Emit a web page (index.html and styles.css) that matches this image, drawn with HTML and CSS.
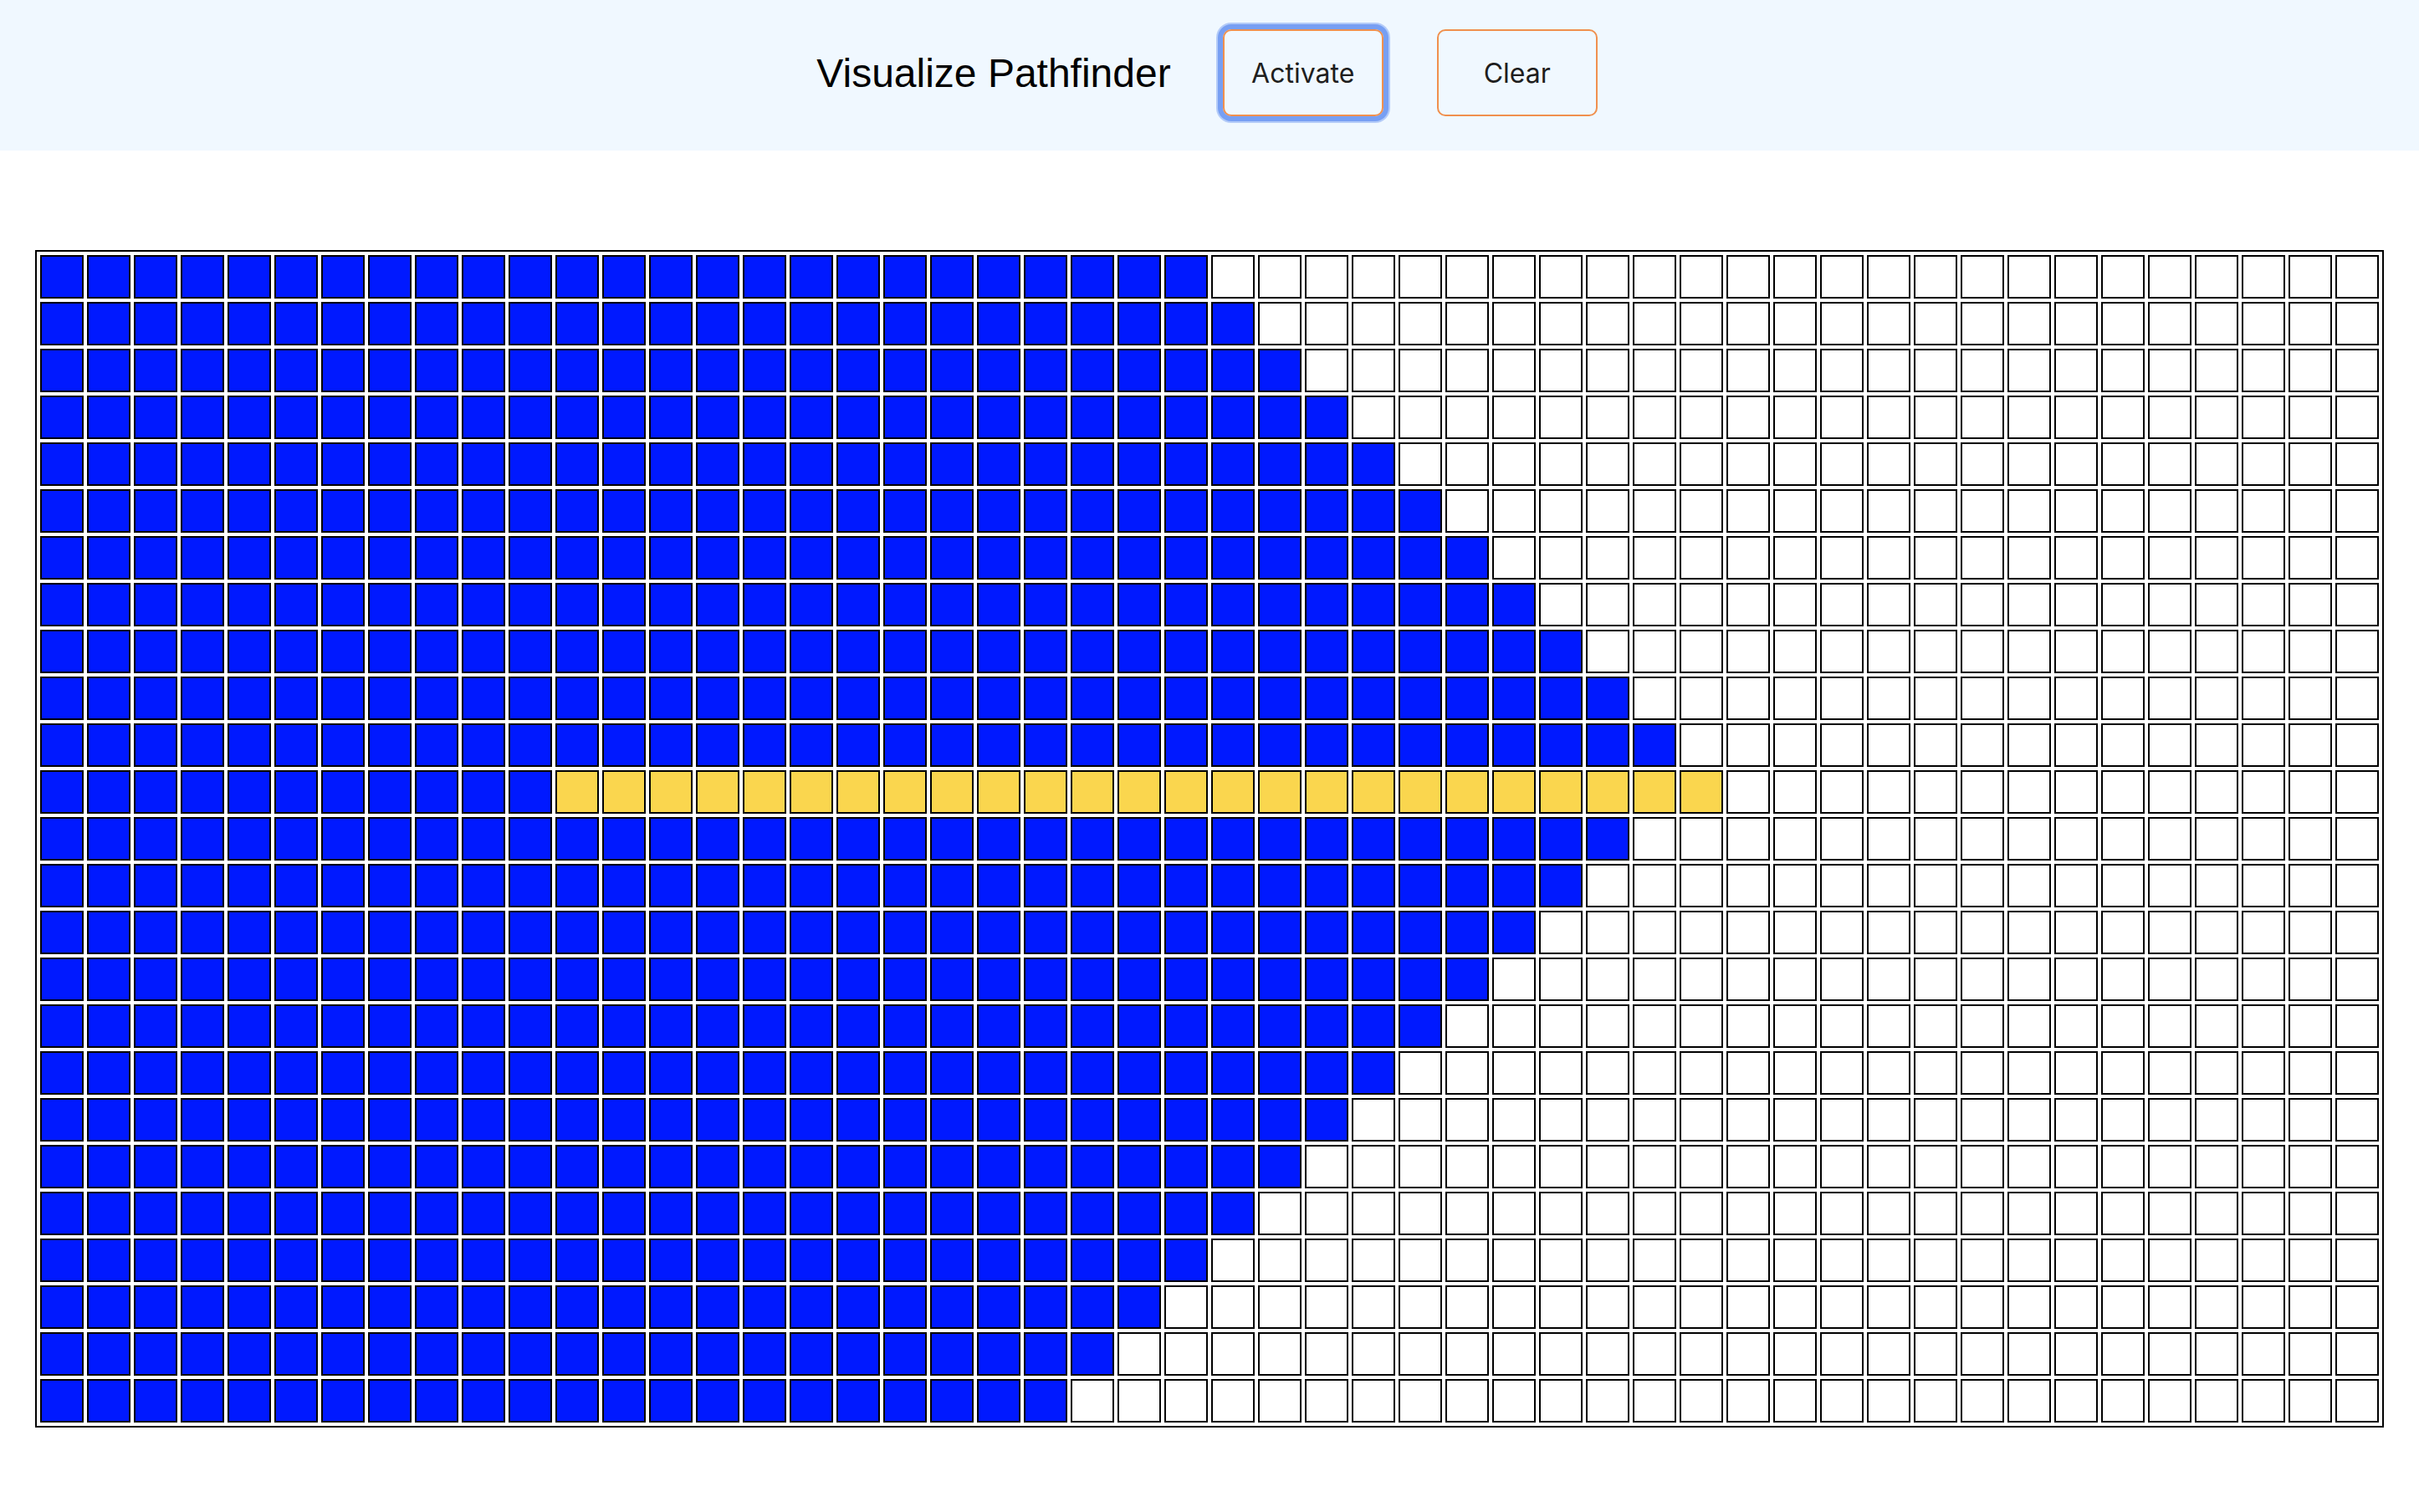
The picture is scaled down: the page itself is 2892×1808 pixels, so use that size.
FILE: index.html
```html
<!DOCTYPE html>
<html lang="en">
<head>
    <meta charset="UTF-8">
    <meta name="viewport" content="width=device-width, initial-scale=1.0">
    <title>Visualize Pathfinder</title>
    <link rel="stylesheet" href="styles.css">
</head>
<body>
    <div class="header">
        <h1 class="title">Visualize Pathfinder</h1>
        <button class="btn btn-focus" id="activate">Activate</button>
        <button class="btn" id="clear">Clear</button>
    </div>

    <div class="grid" id="grid"></div>

    <script>
        const ROWS = 25;
        const COLS = 50;
        const START = { row: 11, col: 11 };
        const FINISH = { row: 11, col: 35 };

        function isVisited(row, col) {
            if (row < START.row) return col <= FINISH.col - (START.row - row);
            if (row > START.row) return col <= FINISH.col - (row - START.row) - 1;
            return col <= FINISH.col;
        }

        function isPath(row, col) {
            return row === START.row && col >= START.col && col <= FINISH.col;
        }

        const grid = document.getElementById('grid');
        for (let row = 0; row < ROWS; row++) {
            for (let col = 0; col < COLS; col++) {
                const node = document.createElement('div');
                node.className = 'node';
                if (isPath(row, col)) {
                    node.classList.add('node-path');
                } else if (isVisited(row, col)) {
                    node.classList.add('node-visited');
                }
                grid.appendChild(node);
            }
        }
    </script>
</body>
</html>
```

FILE: styles.css
```css
body {
    margin: 0;
    font-family: "Liberation Sans", Arial, sans-serif;
    background-color: #fff;
}
.header {
    display: flex;
    justify-content: center;
    align-items: center;
    gap: 64px;
    height: 180px;
    padding: 0 6px 6px 0;
    box-sizing: border-box;
    background-color: #f0f8ff;
}
.title {
    margin: 0 -2px 0 0;
    font-size: 48px;
    font-weight: normal;
    color: #000;
}
.btn {
    width: 192px;
    height: 104px;
    border: 2px solid #f0904e;
    border-radius: 10px;
    background: transparent;
    color: #1e1e1e;
    font-family: Inter, "Liberation Sans", sans-serif;
    font-size: 32px;
    cursor: pointer;
}
.btn-focus {
    box-shadow: 0 0 0 6px #779ff3, 0 0 0 8px #b3cbf8;
}
.grid {
    display: grid;
    grid-template-columns: repeat(50, 52px);
    gap: 4px;
    padding: 4px;
    border: 2px solid #000;
    width: fit-content;
    margin: 119px auto 0;
}
.node {
    width: 52px;
    height: 52px;
    box-sizing: border-box;
    border: 2px solid #000;
    background-color: #fff;
}
.node-visited {
    background-color: #0019ff;
}
.node-path {
    background-color: #fad64e;
}
```
